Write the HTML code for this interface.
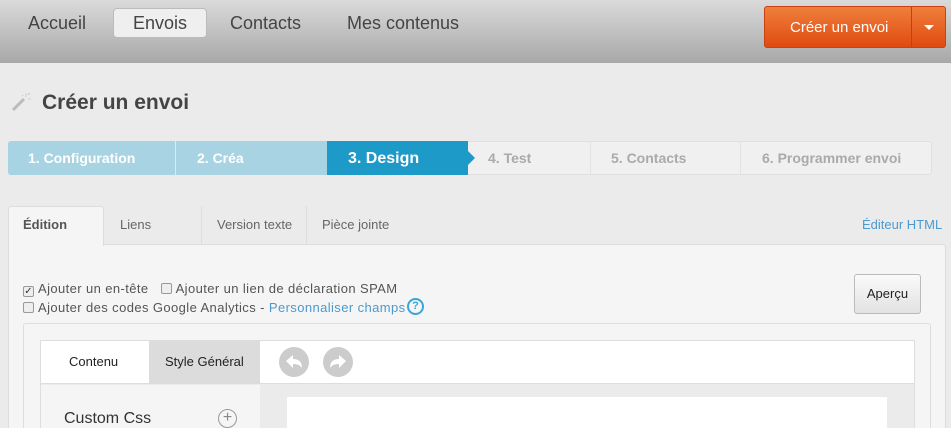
<!DOCTYPE html>
<html><head><meta charset="utf-8"><style>
*{margin:0;padding:0;box-sizing:border-box}
html,body{width:951px;height:428px;overflow:hidden}
body{background:#ebebeb;font-family:"Liberation Sans",sans-serif;position:relative}
.a{position:absolute}
.hdr{left:0;top:0;width:951px;height:63px;background:linear-gradient(#dadada,#a8a8a8)}
.nav{top:13px;font-size:18px;color:#444}
.env{left:113px;top:8px;width:94px;height:30px;border:1px solid #bbb;border-radius:4px;background:#efefef}
.ob{left:764px;top:6px;width:182px;height:42px;border-radius:3px;background:linear-gradient(#f07f3c,#e04a10);border:1px solid #c8430f;color:#fff;font-size:15px}
.step{top:141px;height:34px;line-height:34px;font-size:14px;font-weight:bold;color:#fff}
.tab{top:206px;height:38px;line-height:38px;font-size:13px;color:#666}
.cb{display:inline-block;width:11px;height:11px;border:1px solid #999;border-radius:2px;background:#eee;vertical-align:-1px;margin-right:4px;font-size:10px;line-height:9px;text-align:center;color:#333;letter-spacing:0}
.lbl{font-size:13px;color:#555;letter-spacing:0.4px}
</style></head><body>
<div class="a hdr"></div>
<div class="a env"></div>
<div class="a nav" style="left:28px">Accueil</div>
<div class="a nav" style="left:133px">Envois</div>
<div class="a nav" style="left:230px">Contacts</div>
<div class="a nav" style="left:347px">Mes contenus</div>
<div class="a ob"><span class="a" style="left:25px;top:12px">Créer un envoi</span><div class="a" style="left:146px;top:0;width:1px;height:40px;background:#c4400c"></div><div class="a" style="left:159px;top:18px;border-left:5px solid transparent;border-right:5px solid transparent;border-top:5px solid #fff"></div></div>
<svg class="a" style="left:11px;top:92px" width="20" height="20"><line x1="2" y1="18" x2="13" y2="7" stroke="#bbb" stroke-width="3"/><g stroke="#ccc" stroke-width="1"><line x1="15" y1="1" x2="15" y2="5"/><line x1="17" y1="7" x2="20" y2="7"/><line x1="17" y1="3" x2="19" y2="1"/><line x1="11" y1="3" x2="12" y2="4"/></g></svg>
<div class="a" style="left:42px;top:91px;font-size:21px;font-weight:bold;color:#444">Créer un envoi</div>
<div class="a" style="left:8px;top:141px;width:924px;height:34px;background:#f0f0f0;border:1px solid #e0e0e0;border-radius:3px"></div>
<div class="a" style="left:8px;top:141px;width:319px;height:34px;background:#a8d3e3;border-radius:3px 0 0 3px"></div>
<div class="a" style="left:175px;top:141px;width:1px;height:34px;background:#d9ecf3"></div>
<div class="a" style="left:327px;top:141px;width:141px;height:34px;background:#1e9ac9"></div>
<div class="a" style="left:468px;top:151px;border-top:7px solid transparent;border-bottom:7px solid transparent;border-left:7px solid #1e9ac9"></div>
<div class="a" style="left:590px;top:141px;width:1px;height:34px;background:#e2e2e2"></div>
<div class="a" style="left:740px;top:141px;width:1px;height:34px;background:#e2e2e2"></div>
<div class="a step" style="left:28px">1. Configuration</div>
<div class="a step" style="left:197px">2. Créa</div>
<div class="a step" style="left:348px;font-size:16px;top:142px">3. Design</div>
<div class="a step" style="left:488px;color:#aaa">4. Test</div>
<div class="a step" style="left:611px;color:#aaa">5. Contacts</div>
<div class="a step" style="left:762px;color:#aaa">6. Programmer envoi</div>
<div class="a" style="left:8px;top:244px;width:938px;height:190px;background:#f5f5f5;border:1px solid #ddd;border-radius:3px"></div>
<div class="a" style="left:8px;top:206px;width:96px;height:40px;background:#f5f5f5;border:1px solid #ddd;border-bottom:none;border-radius:3px 3px 0 0"></div>
<div class="a" style="left:201px;top:206px;width:1px;height:38px;background:#ddd"></div>
<div class="a" style="left:306px;top:206px;width:1px;height:38px;background:#ddd"></div>
<div class="a tab" style="left:23px;font-weight:bold;color:#555">Édition</div>
<div class="a tab" style="left:120px">Liens</div>
<div class="a tab" style="left:217px">Version texte</div>
<div class="a tab" style="left:322px">Pièce jointe</div>
<div class="a tab" style="left:862px;color:#4a9ad0">Éditeur HTML</div>
<div class="a lbl" style="left:23px;top:281px"><span class="cb">✓</span>Ajouter un en-tête &nbsp;&nbsp;<span class="cb"></span>Ajouter un lien de déclaration SPAM</div>
<div class="a lbl" style="left:23px;top:300px"><span class="cb"></span>Ajouter des codes Google Analytics - <span style="color:#4a9ad0">Personnaliser champs</span></div>
<div class="a" style="left:407px;top:298px;width:17px;height:17px;border:2px solid #3aa5d8;border-radius:50%;color:#3aa5d8;font-size:11px;font-weight:bold;text-align:center;line-height:13px">?</div>
<div class="a" style="left:854px;top:274px;width:67px;height:40px;border:1px solid #bbb;border-radius:3px;background:linear-gradient(#fafafa,#e2e2e2);font-size:13px;color:#222;text-align:center;line-height:38px">Aperçu</div>
<div class="a" style="left:23px;top:323px;width:908px;height:110px;border:1px solid #ddd;border-radius:3px;background:#f5f5f5"></div>
<div class="a" style="left:40px;top:340px;width:875px;height:93px;border:1px solid #ddd;background:#ebebeb"></div>
<div class="a" style="left:41px;top:341px;width:873px;height:43px;background:#fff;border-bottom:1px solid #ddd"></div>
<div class="a" style="left:149px;top:341px;width:111px;height:43px;background:#dcdcdc"></div>
<div class="a" style="left:69px;top:354px;font-size:13px;color:#222">Contenu</div>
<div class="a" style="left:165px;top:354px;font-size:13px;color:#222">Style Général</div>
<svg class="a" style="left:279px;top:347px" width="90" height="30"><circle cx="15" cy="15" r="15" fill="#ccc"/><circle cx="59" cy="15" r="15" fill="#ccc"/><path d="M7 14l7-6v4c6 0 9 3 9 9-2-3-5-4-9-4v4z" fill="#fff"/><path d="M67 14l-7-6v4c-6 0-9 3-9 9 2-3 5-4 9-4v4z" fill="#fff"/></svg>
<div class="a" style="left:41px;top:385px;width:219px;height:50px;background:#f5f5f5"></div>
<div class="a" style="left:287px;top:397px;width:600px;height:40px;background:#fff"></div>
<div class="a" style="left:64px;top:410px;font-size:16px;color:#333">Custom Css</div>
<div class="a" style="left:218px;top:409px;width:19px;height:19px;border:1px solid #999;border-radius:50%;color:#888;text-align:center;line-height:16px;font-size:16px">+</div>
</body></html>
